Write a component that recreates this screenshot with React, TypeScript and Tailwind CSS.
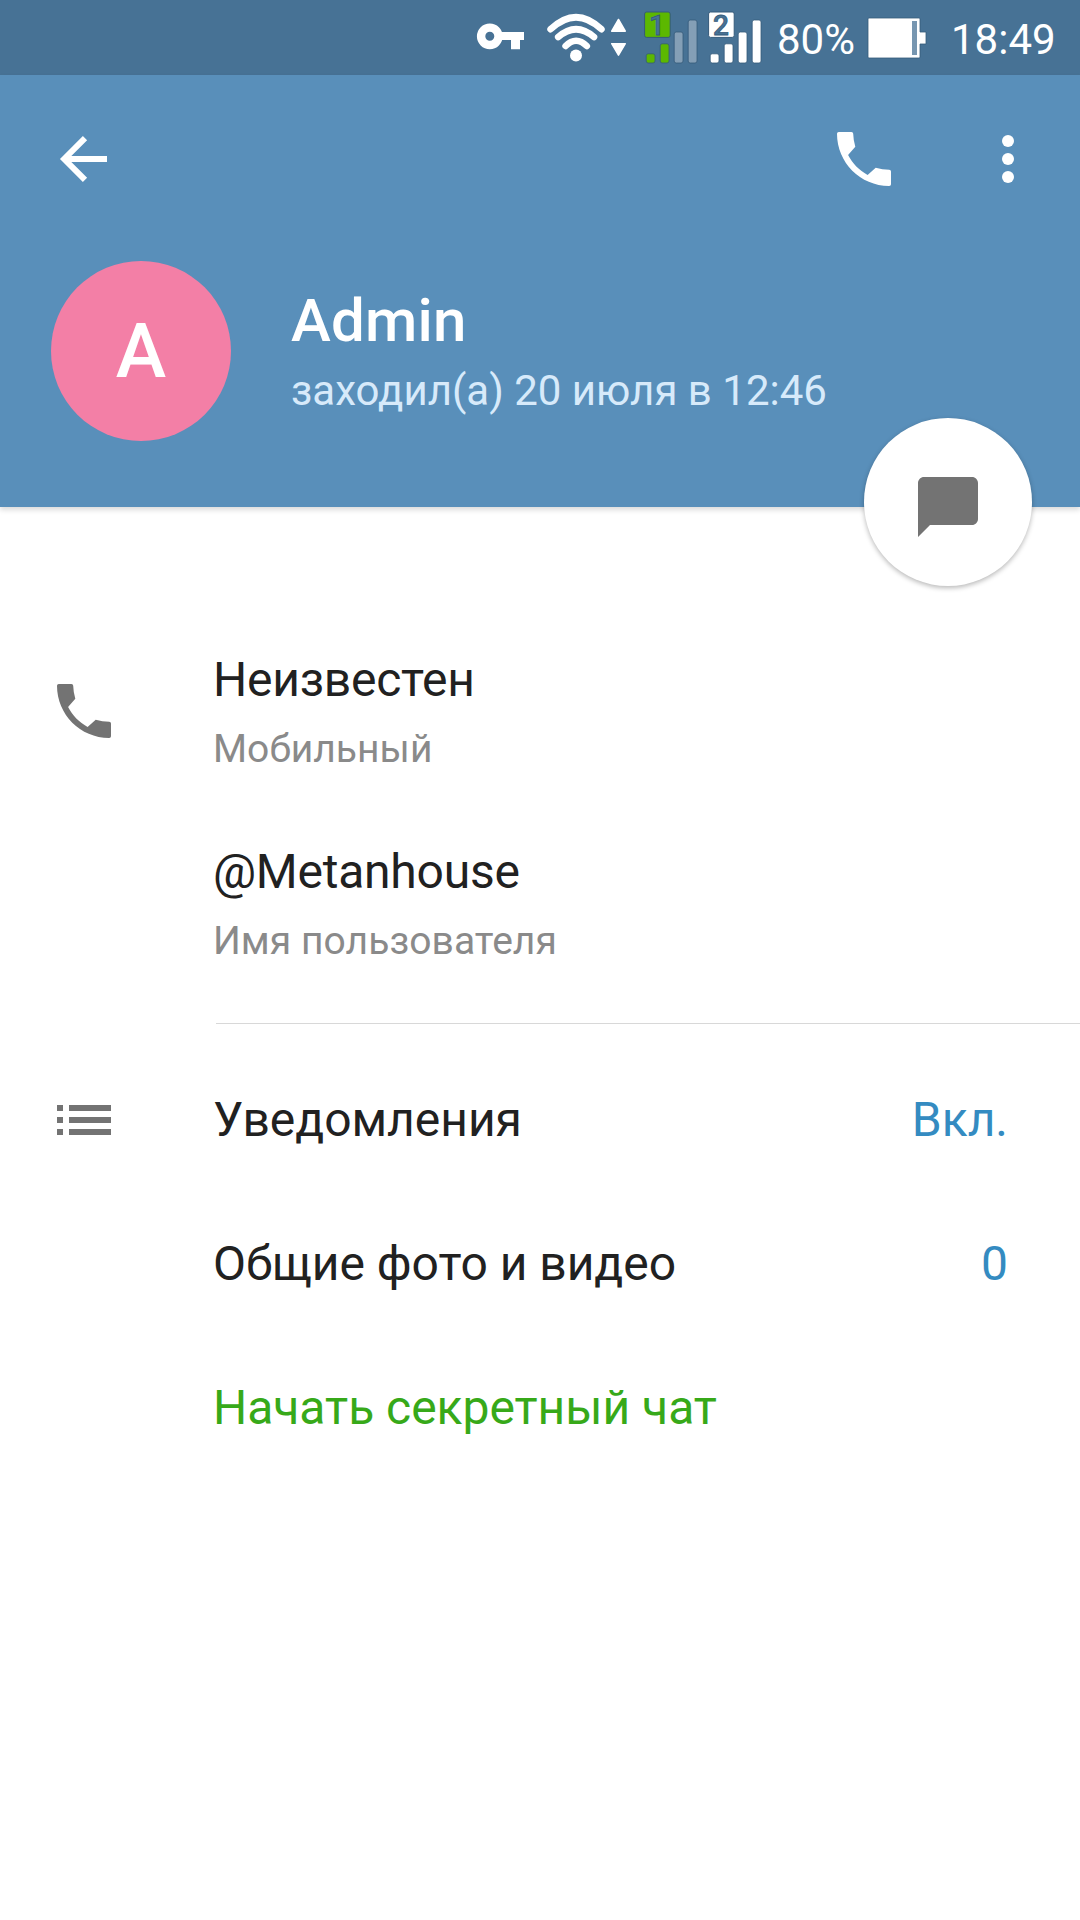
import type { ReactNode } from "react";

function KeyIcon() {
  return (
    <svg viewBox="476 0 48 75" className="h-[75px] w-12" aria-hidden="true">
      <circle cx="489.8" cy="36.3" r="8.7" fill="none" stroke="#fff" strokeWidth="8.4" />
      <path fill="#fff" d="M500 32h24v8h-4v9.3h-9V40h-11Z" />
    </svg>
  );
}

function WifiIcon() {
  return (
    <svg viewBox="546 0 82 75" className="h-[75px] w-[82px]" aria-hidden="true">
      <g fill="none" stroke="#fff" strokeWidth="6.6" strokeLinecap="round">
        <path d="M550.6 29.2Q576 5.2 601.4 29.2" />
        <path d="M558.2 37Q576 21.4 594 37" />
        <path d="M565.6 46Q576 35.4 586.8 46" />
      </g>
      <circle cx="576" cy="55.4" r="6" fill="#fff" />
      <path fill="#fff" stroke="#fff" strokeWidth="1.5" strokeLinejoin="round" d="m618.5 19.5 6.8 11.7h-13.6ZM618.5 55.2l-6.8-11.5h13.6Z" />
    </svg>
  );
}

function SignalIcon(props: { sim: string; active: number; color: string }) {
  const bars = [
    { x: 2.2, y: 53.8 },
    { x: 16.2, y: 43.8 },
    { x: 30.2, y: 32 },
    { x: 44.2, y: 20 },
  ];

  return (
    <svg viewBox="0 0 56 75" className="h-[75px] w-14" aria-hidden="true">
      <rect x="0.6" y="12" width="25.6" height="25.4" rx="2" fill={props.color} stroke="#355a7a" strokeWidth="1" />
      <text x="13" y="34.6" textAnchor="middle" fill="#477295" stroke="#355a7a" strokeWidth="0.8" className="font-[Roboto] text-[28px] font-medium">
        {props.sim}
      </text>
      {bars.map((bar, i) => (
        <rect
          key={bar.x}
          x={bar.x}
          y={bar.y}
          width="8.8"
          height={63 - bar.y}
          rx="2"
          fill={i < props.active ? props.color : "#849fb6"}
          stroke="#355a7a"
          strokeWidth="0.8"
        />
      ))}
    </svg>
  );
}

function BatteryIcon() {
  return (
    <svg viewBox="867 0 60 75" className="h-[75px] w-[60px]" aria-hidden="true">
      <path fill="#fff" stroke="#355a7a" strokeWidth="0.8" d="M869 18h50q1 0 1 1v13h6v12h-6v13q0 1-1 1h-50q-1 0-1-1V19q0-1 1-1Z" />
      <rect x="912" y="21" width="5" height="34" fill="#7796b0" />
    </svg>
  );
}

function BackIcon() {
  return (
    <svg viewBox="0 0 72 72" className="size-[72px]" fill="none" stroke="#fff" strokeWidth="6" aria-hidden="true">
      <path d="M59 36H16M37 15.2 16.2 36 37 56.8" />
    </svg>
  );
}

function PhoneIcon(props: { className: string }) {
  return (
    <svg viewBox="0 0 24 24" className={props.className} fill="currentColor" aria-hidden="true">
      <path d="M3.6 3h4.2q.6 0 .6.6.05 2.1.7 4.3L6.7 10.7c1.44 2.83 3.7 5.1 6.5 6.6L15.9 14.9q2.2.65 4.5.65.6 0 .6.6v4.25q0 .6-.6.6C10.8 21 3 13.2 3 3.6q0-.6.6-.6Z" />
    </svg>
  );
}

function MoreIcon() {
  return (
    <svg viewBox="0 0 24 24" className="size-[72px]" fill="#fff" aria-hidden="true">
      <circle cx="12" cy="6" r="2" />
      <circle cx="12" cy="12" r="2" />
      <circle cx="12" cy="18" r="2" />
    </svg>
  );
}

function ListIcon() {
  return (
    <svg viewBox="0 0 54 30" className="h-[30px] w-[54px]" fill="#737373" aria-hidden="true">
      <path d="M0 0h6v6H0ZM12 0h42v6H12ZM0 12h6v6H0ZM12 12h42v6H12ZM0 24h6v6H0ZM12 24h42v6H12Z" />
    </svg>
  );
}

function InfoRow(props: { icon?: ReactNode; title: string; label: string }) {
  return (
    <div className="flex h-48">
      <div className="w-[213px] pt-[60px] pl-12 text-[#737373]">{props.icon}</div>
      <div className="pt-[37px]">
        <div className="text-[48px] leading-[56px] tracking-[-0.24px] text-[#212121]">{props.title}</div>
        <div className="mt-[17px] text-[39px] leading-[48px] tracking-[0.05px] text-[#8a8a8a]">{props.label}</div>
      </div>
    </div>
  );
}

function SettingRow(props: { icon?: ReactNode; title: string; value?: string; accent?: boolean }) {
  return (
    <div className="flex h-36 items-center pr-[72px] text-[48px] leading-[56px] tracking-[-0.03px]">
      <div className="w-[213px] pl-[57px]">{props.icon}</div>
      <div className={props.accent ? "flex-1 text-[#37a919]" : "flex-1 text-[#212121]"}>{props.title}</div>
      {props.value && <div className="text-[#348bc1]">{props.value}</div>}
    </div>
  );
}

export default function App() {
  return (
    <div className="h-[1920px] w-[1080px] overflow-hidden bg-white font-[Roboto,sans-serif]">
      <div className="flex h-[75px] items-center bg-[#477295] pl-[476px] text-[42px] leading-[50px] text-white">
        <KeyIcon />
        <div className="ml-[22px] flex">
          <WifiIcon />
        </div>
        <div className="ml-4 flex gap-2">
          <SignalIcon sim="1" active={2} color="#5cb800" />
          <SignalIcon sim="2" active={4} color="#ffffff" />
        </div>
        <div className="ml-[13px] w-[90px] pt-1">80%</div>
        <BatteryIcon />
        <div className="ml-6 pt-1">18:49</div>
      </div>

      <header className="relative h-[432px] bg-[#598fba] shadow-[0_3px_5px_rgba(0,0,0,0.14)]">
        <div className="flex h-[168px] items-center pr-9 pl-12">
          <BackIcon />
          <PhoneIcon className="ml-auto size-[72px] text-white" />
          <div className="ml-[72px]">
            <MoreIcon />
          </div>
        </div>
        <div className="flex pt-[18px] pl-[51px]">
          <div className="flex size-[180px] items-center justify-center rounded-full bg-[#f37fa6] text-[76px] font-medium text-white">A</div>
          <div className="ml-[60px] pt-[25px]">
            <div className="text-[60px] leading-[70px] font-medium tracking-[0.2px] text-white">Admin</div>
            <div className="mt-[10px] text-[42px] leading-[50px] text-[#d7eafa]">заходил(а) 20 июля в 12:46</div>
          </div>
        </div>
        <button className="absolute top-[343px] right-12 flex size-[168px] items-center justify-center rounded-full bg-white pt-[10px] shadow-[0_2px_5px_rgba(0,0,0,0.28)]" aria-label="Чат">
          <svg viewBox="0 0 24 24" className="size-[72px]" fill="#737373" aria-hidden="true">
            <path d="M20 2H4c-1.1 0-2 .9-2 2v18l4-4h14c1.1 0 2-.9 2-2V4c0-1.1-.9-2-2-2Z" />
          </svg>
        </button>
      </header>

      <main className="pt-[108px]">
        <InfoRow icon={<PhoneIcon className="size-[72px]" />} title="Неизвестен" label="Мобильный" />
        <InfoRow title="@Metanhouse" label="Имя пользователя" />
        <div className="mt-6 ml-[216px] h-px bg-[#d8d8d8]" />
        <div className="pt-6">
          <SettingRow icon={<ListIcon />} title="Уведомления" value="Вкл." />
          <SettingRow title="Общие фото и видео" value="0" />
          <SettingRow title="Начать секретный чат" accent />
        </div>
      </main>
    </div>
  );
}
